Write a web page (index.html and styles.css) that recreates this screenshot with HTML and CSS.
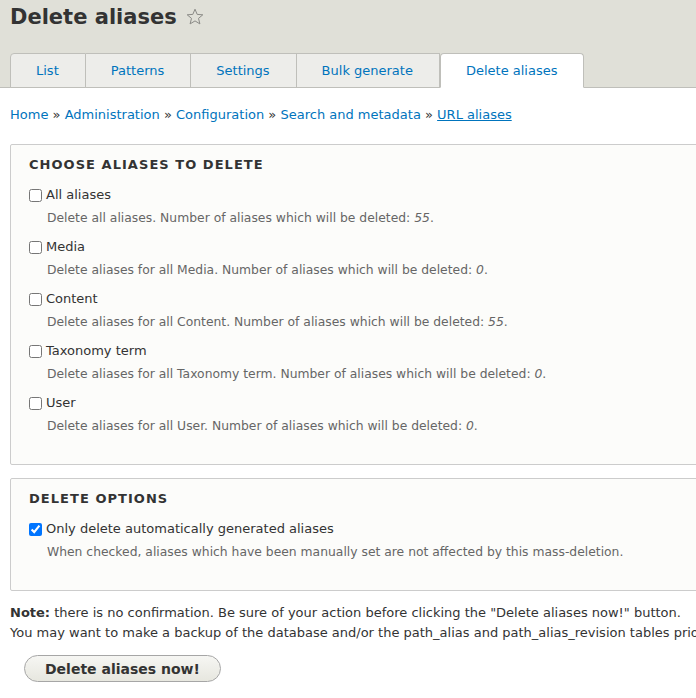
FILE: index.html
```html
<!DOCTYPE html>
<html lang="en">
  <head>
    <meta charset="UTF-8" />
    <meta name="viewport" content="width=device-width, initial-scale=1.0" />
    <title>Delete aliases</title>
    <link rel="stylesheet" href="styles.css">
  </head>
  <body>
    <div class="page">
      <header class="page_header">
        <h1 class="page_title">
          Delete aliases
          <svg class="star" width="18" height="18" viewBox="0 0 18 18">
            <path d="M9 1.2 L11.2 6.4 L16.8 6.8 L12.5 10.4 L13.9 15.9 L9 12.9 L4.1 15.9 L5.5 10.4 L1.2 6.8 L6.8 6.4 Z" fill="none" stroke="#8a8a86" stroke-width="1" stroke-linejoin="round" />
          </svg>
        </h1>
        <nav class="tabs">
          <a href="#" class="tab">List</a>
          <a href="#" class="tab">Patterns</a>
          <a href="#" class="tab">Settings</a>
          <a href="#" class="tab">Bulk generate</a>
          <a href="#" class="tab tab_active">Delete aliases</a>
        </nav>
      </header>

      <main class="content">
        <div class="breadcrumb">
          <a href="#">Home</a> <span class="sep">»</span>
          <a href="#">Administration</a> <span class="sep">»</span>
          <a href="#">Configuration</a> <span class="sep">»</span>
          <a href="#">Search and metadata</a> <span class="sep">»</span>
          <a href="#" class="current">URL aliases</a>
        </div>

        <form>
          <div class="fieldset">
            <div class="legend">Choose aliases to delete</div>
            <div class="form_item">
              <label class="check"><input type="checkbox" /> All aliases</label>
              <div class="description">Delete all aliases. Number of aliases which will be deleted: <em>55</em>.</div>
            </div>
            <div class="form_item">
              <label class="check"><input type="checkbox" /> Media</label>
              <div class="description">Delete aliases for all Media. Number of aliases which will be deleted: <em>0</em>.</div>
            </div>
            <div class="form_item">
              <label class="check"><input type="checkbox" /> Content</label>
              <div class="description">Delete aliases for all Content. Number of aliases which will be deleted: <em>55</em>.</div>
            </div>
            <div class="form_item">
              <label class="check"><input type="checkbox" /> Taxonomy term</label>
              <div class="description">Delete aliases for all Taxonomy term. Number of aliases which will be deleted: <em>0</em>.</div>
            </div>
            <div class="form_item">
              <label class="check"><input type="checkbox" /> User</label>
              <div class="description">Delete aliases for all User. Number of aliases which will be deleted: <em>0</em>.</div>
            </div>
          </div>

          <div class="fieldset">
            <div class="legend">Delete options</div>
            <div class="form_item">
              <label class="check"><input type="checkbox" checked /> Only delete automatically generated aliases</label>
              <div class="description">When checked, aliases which have been manually set are not affected by this mass-deletion.</div>
            </div>
          </div>

          <p class="note">
            <strong>Note:</strong> there is no confirmation. Be sure of your action before clicking the "Delete aliases now!" button.<br />
            You may want to make a backup of the database and/or the path_alias and path_alias_revision tables prior to using this feature.
          </p>

          <div class="actions">
            <button type="button" class="button">Delete aliases now!</button>
          </div>
        </form>
      </main>
    </div>
  </body>
</html>
```

FILE: styles.css
```css
html {
  overflow-x: hidden;
}

body {
  margin: 0;

  --text: #333;
  --muted: #666;
  --link: #0074bd;
  --header: #e0e0d8;
  --tab: #ededea;
  --tab_border: #bfbfba;

  font-family: "DejaVu Sans", Verdana, sans-serif;
  font-size: 13px;
  line-height: 20px;
  color: var(--text);
  background-color: #fff;
}

.page {
  width: 1000px;
}

a {
  color: var(--link);
  text-decoration: none;
}

.page_header {
  background-color: var(--header);
  padding: 0 10px;
  border-bottom: 1px solid var(--tab_border);
}

.page_title {
  margin: 0;
  padding-top: 4px;
  font-size: 21px;
  line-height: 26px;
  font-weight: bold;
  display: flex;
  align-items: center;
  gap: 9px;
}

.tabs {
  display: flex;
  margin-top: 23px;
  margin-bottom: -1px;
}

.tab {
  display: block;
  height: 33px;
  line-height: 33px;
  padding: 0 26px 0 25px;
  background-color: var(--tab);
  border: 1px solid var(--tab_border);
  border-left: none;
}

.tab:first-child {
  border-left: 1px solid var(--tab_border);
  border-top-left-radius: 4px;
}

.tab_active {
  background-color: #fff;
  border-left: 1px solid var(--tab_border);
  border-bottom-color: #fff;
  border-radius: 4px 4px 0 0;
  position: relative;
  z-index: 1;
}

.content {
  padding: 17px 10px 20px;
}

.breadcrumb .sep {
  color: var(--text);
}

.breadcrumb .current {
  text-decoration: underline;
}

.fieldset {
  background-color: #fcfcfa;
  border: 1px solid #ccc;
  border-radius: 2px;
  padding: 10px 18px 28px;
  margin-top: 19px;
}

.fieldset + .fieldset {
  margin-top: 13px;
}

.legend {
  font-weight: bold;
  text-transform: uppercase;
  letter-spacing: 0.08em;
  margin-bottom: 10px;
}

.form_item + .form_item {
  margin-top: 9px;
}

.check {
  display: flex;
  align-items: center;
  gap: 4px;
}

.check input {
  margin: 0;
  width: 13px;
  height: 13px;
}

.description {
  margin-top: 3px;
  padding-left: 18px;
  font-size: 0.95em;
  color: var(--muted);
}

.note {
  margin: 12px 0 0;
}

.actions {
  margin-top: 12px;
  padding-left: 14px;
}

.button {
  font-family: "DejaVu Sans", Verdana, sans-serif;
  font-size: 14px;
  font-weight: bold;
  color: var(--text);
  height: 27px;
  padding: 0 20px;
  border: 1px solid #a6a6a6;
  border-radius: 20px;
  background: linear-gradient(#f6f6f3, #e7e7df);
  cursor: pointer;
}
```
